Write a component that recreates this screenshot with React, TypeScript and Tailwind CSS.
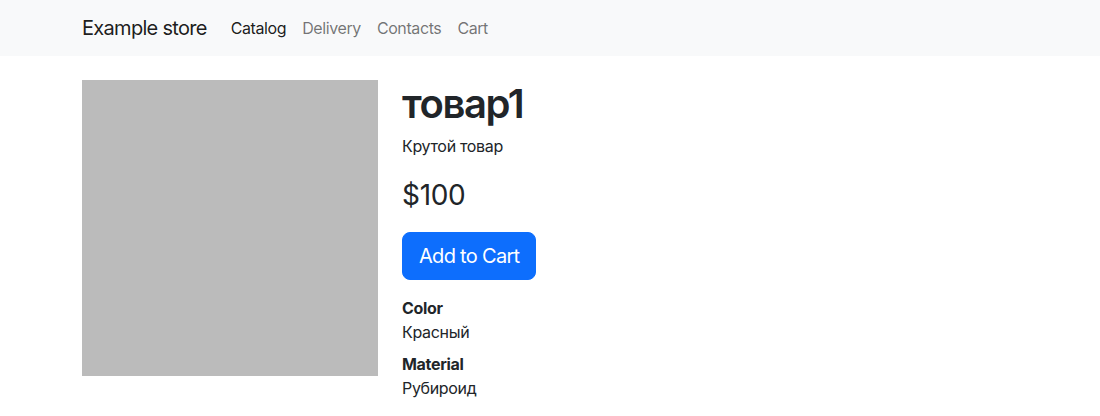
import React from "react";

export default function App() {
  return (
    <div className="min-h-[416px] bg-white text-[#212529] tracking-[-0.02em]" style={{ fontFamily: "Inter, 'Noto Sans', sans-serif" }}>
      <nav className="h-14 bg-[#f8f9fa]">
        <div className="mx-auto flex h-full w-[960px] items-center px-3">
          <a className="mr-4 text-[20px] leading-[30px] tracking-[-0.035em] text-black/90">Example store</a>
          <div className="flex text-[16px] leading-6 tracking-[-0.025em]">
            <a className="px-2 text-black/90">Catalog</a>
            <a className="px-2 text-black/55">Delivery</a>
            <a className="px-2 text-black/55">Contacts</a>
            <a className="px-2 text-black/55">Cart</a>
          </div>
        </div>
      </nav>
      <main className="mx-auto mt-6 flex w-[960px] gap-6 px-3">
        <div className="h-[296px] w-[296px] shrink-0 bg-[#bbbbbb]" />
        <div className="flex flex-col items-start">
          <h1 className="mb-[6px] text-[40px] font-semibold leading-[48px] tracking-[-0.035em]">товар1</h1>
          <p className="mb-5 text-[16px] leading-6">Крутой товар</p>
          <div className="mb-5 text-[28px] leading-[34px]">$100</div>
          <button className="mb-4 rounded-lg border border-[#0d6efd] bg-[#0d6efd] px-4 py-2 text-[20px] leading-[30px] tracking-[-0.035em] text-white">Add to Cart</button>
          <div className="text-[16px] leading-6">
            <div className="font-bold">Color</div>
            <div className="mb-2">Красный</div>
            <div className="font-bold">Material</div>
            <div>Рубироид</div>
          </div>
        </div>
      </main>
    </div>
  );
}
